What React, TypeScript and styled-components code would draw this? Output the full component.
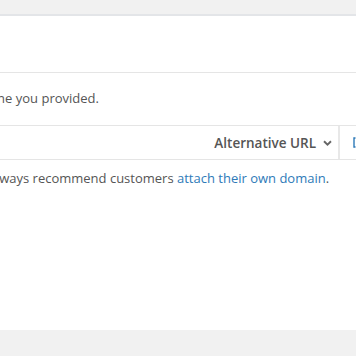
import React from 'react';
import styled, { createGlobalStyle } from 'styled-components';

const GlobalStyle = createGlobalStyle`
  html, body {
    margin: 0;
    padding: 0;
    background: #fff;
  }
  body {
    font-family: 'Open Sans', 'Liberation Sans', sans-serif;
    font-size: 13px;
    color: #555;
    overflow: hidden;
  }
`;

const Page = styled.div`
  width: 356px;
  height: 356px;
  display: flex;
  flex-direction: column;
  overflow: hidden;
`;

const TopBar = styled.div`
  height: 14px;
  flex: none;
  background: #f1f1f1;
  border-bottom: 2px solid #e3e5e8;
`;

const Content = styled.div`
  flex: 1 1 auto;
  display: flex;
  flex-direction: column;
  margin-left: -34px;
  background: #fff;
`;

const Blank = styled.div`
  height: 56px;
  border-bottom: 1px solid #e5e5e5;
`;

const Note = styled.p<{ $pad: number }>`
  margin: 0;
  padding: ${p => p.$pad}px 0 0;
  height: 24px;
  line-height: 24px;
  white-space: nowrap;
`;

const Link = styled.a`
  color: #2e7ab8;
  text-decoration: none;
`;

const FieldRow = styled.div`
  margin-top: 15px;
  height: 33px;
  display: flex;
  align-items: stretch;
  border-top: 1px solid #e5e5e5;
  border-bottom: 1px solid #e5e5e5;
`;

const FieldInput = styled.div`
  flex: 1 1 auto;
`;

const Select = styled.div`
  display: flex;
  align-items: center;
  gap: 7px;
  padding: 0 6px 0 0;
  font-weight: 600;
  font-size: 13.5px;
  color: #555;
  border-right: 2px solid #e8e8e8;
`;

const Side = styled.div`
  width: 16px;
  flex: none;
  display: flex;
  align-items: center;
  justify-content: flex-end;
`;

const Chevron = () => (
  <svg width="9" height="6" viewBox="0 0 9 6">
    <path d="M1 1.2 L4.5 4.6 L8 1.2" fill="none" stroke="#666" strokeWidth="1.9" />
  </svg>
);

const CopyIcon = () => (
  <svg width="3" height="12" viewBox="0 0 3 12">
    <path d="M2.5 1 H1 V10 H2.5" fill="none" stroke="#2e7ab8" strokeWidth="1.4" />
  </svg>
);

const Footer = styled.div`
  height: 26px;
  flex: none;
  background: #f1f1f1;
`;

export default function App() {
  return (
    <>
      <GlobalStyle />
      <Page>
        <TopBar />
        <Content>
          <Blank />
          <Note $pad={13}>the one you provided.</Note>
          <FieldRow>
            <FieldInput />
            <Select>
              Alternative URL <Chevron />
            </Select>
            <Side>
              <CopyIcon />
            </Side>
          </FieldRow>
          <Note $pad={6}>
            We always recommend customers <Link href="#">attach their own domain</Link>.
          </Note>
        </Content>
        <Footer />
      </Page>
    </>
  );
}
